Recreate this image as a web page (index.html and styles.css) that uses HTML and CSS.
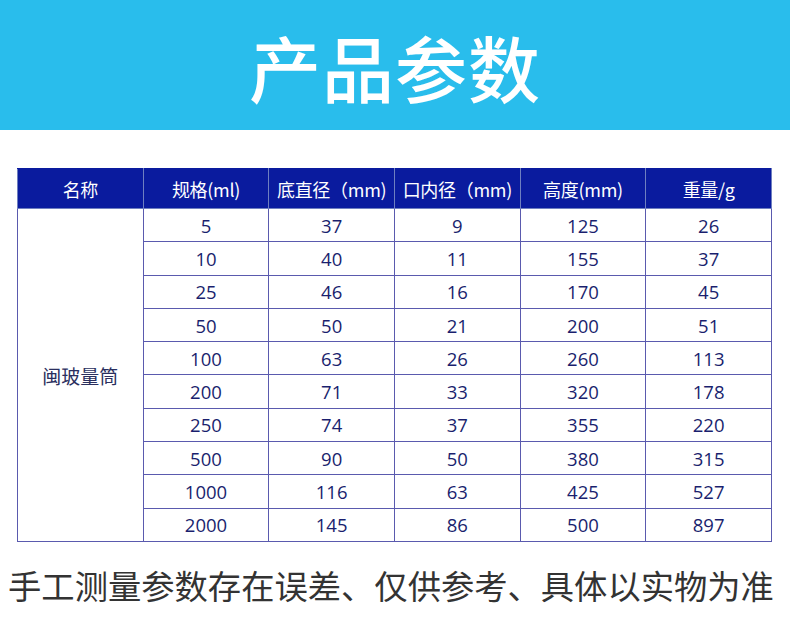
FILE: index.html
```html
<!DOCTYPE html>
<html lang="zh-CN">
<head>
<meta charset="utf-8">
<title>产品参数</title>
<link rel="stylesheet" href="styles.css">
</head>
<body>
<header class="banner"><h1 class="title">产品参数</h1></header>
<main class="content">
<table class="spec">
<thead>
<tr><th>名称</th><th>规格(ml)</th><th>底直径（mm)</th><th>口内径（mm)</th><th>高度(mm)</th><th>重量/g</th></tr>
</thead>
<tbody>
<tr><td class="name" rowspan="10">闽玻量筒</td><td>5</td><td>37</td><td>9</td><td>125</td><td>26</td></tr>
<tr><td>10</td><td>40</td><td>11</td><td>155</td><td>37</td></tr>
<tr><td>25</td><td>46</td><td>16</td><td>170</td><td>45</td></tr>
<tr><td>50</td><td>50</td><td>21</td><td>200</td><td>51</td></tr>
<tr><td>100</td><td>63</td><td>26</td><td>260</td><td>113</td></tr>
<tr><td>200</td><td>71</td><td>33</td><td>320</td><td>178</td></tr>
<tr><td>250</td><td>74</td><td>37</td><td>355</td><td>220</td></tr>
<tr><td>500</td><td>90</td><td>50</td><td>380</td><td>315</td></tr>
<tr><td>1000</td><td>116</td><td>63</td><td>425</td><td>527</td></tr>
<tr><td>2000</td><td>145</td><td>86</td><td>500</td><td>897</td></tr>
</tbody>
</table>
</main>
<p class="note">手工测量参数存在误差、仅供参考、具体以实物为准</p>
</body>
</html>
```
FILE: styles.css
```css
html, body {
  margin: 0;
  padding: 0;
  background: #ffffff;
}
body {
  font-family: "Noto Sans CJK SC", "Noto Sans", sans-serif;
  width: 790px;
}
.banner {
  height: 130px;
  background: #29bdec;
  display: flex;
  align-items: center;
  justify-content: center;
}
.title {
  margin: 0;
  color: #ffffff;
  font-size: 72px;
  font-weight: 500;
  line-height: 1;
  letter-spacing: 1px;
  padding-top: 2px;
}
.content {
  padding: 38px 0 0 17px;
}
.spec {
  border-collapse: collapse;
  table-layout: fixed;
  width: 755px;
}
.spec th, .spec td {
  text-align: center;
  padding: 0;
  white-space: nowrap;
  overflow: hidden;
}
.spec th {
  height: 39px;
  background: #0a1b9e;
  color: #ffffff;
  font-weight: 400;
  font-size: 18px;
  letter-spacing: -0.3px;
  border: 1px solid #6f7fc0;
  border-top-color: #0a1b9e;
}
.spec td {
  height: 32.3px;
  color: #1a1f6e;
  border: 1px solid #5a5aae;
  font-family: "Open Sans", "Noto Sans CJK SC", sans-serif;
  font-weight: 500;
  font-size: 18.5px;
}
.spec td.name {
  font-family: "Noto Sans CJK SC", sans-serif;
  font-weight: 400;
  font-size: 19px;
  color: #2a2f5e;
  padding-top: 2px;
}
.note {
  margin: 23px 0 0;
  padding-right: 8px;
  text-align: center;
  font-size: 33.3px;
  color: #333333;
  line-height: 40px;
  font-weight: 400;
  white-space: nowrap;
}
```
